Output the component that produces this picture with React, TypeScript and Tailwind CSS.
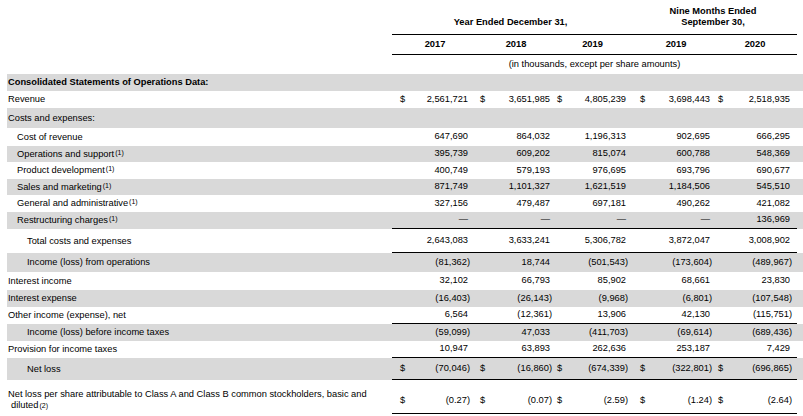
import type { ReactNode } from "react";

// column groups: 2017, 2018, 2019 | 2019, 2020 (9 months)
const GROUPS = [
  "w-[78px] pl-[8px] pr-[0px]",
  "w-[82px] pl-[10px] pr-[0px]",
  "w-[77px] pl-[5px] pr-[1px]",
  "w-[83px] pl-[11px] pr-[0px]",
  "w-[85px] pl-[6px] pr-[5px]",
];

const Sup = ({ n, flat }: { n: number; flat?: boolean }) => (
  <span className={`ml-[1px] text-[7px] leading-none ${flat ? "align-baseline" : "align-[2px]"}`}>({n})</span>
);

type RowProps = {
  label: ReactNode;
  indent?: 0 | 1 | 2;
  values?: string[];
  dollar?: boolean;
  gray?: boolean;
  h: string;
  line?: boolean;
  bold?: boolean;
  bottom?: boolean;
};

const Row = ({ label, indent = 0, values, dollar, gray, h, line, bold, bottom }: RowProps) => (
  <div className={`flex ${h} ${gray ? "bg-[#d9d9d9]" : ""}`}>
    <div
      className={`w-[385px] flex ${bottom ? "items-end pb-[3px]" : "items-center"} ${
        indent === 0 ? "pl-[1px]" : indent === 1 ? "pl-[10px]" : "pl-[20px]"
      } ${bold ? "font-bold" : ""}`}
    >
      <div className="leading-[11px]">{label}</div>
    </div>
    <div className={`flex h-full ${line ? "border-b border-black" : ""}`}>
      {GROUPS.map((g, i) => {
        const v = values ? values[i] : "";
        const neg = v.startsWith("(");
        return (
          <div key={i} className={`${g} flex justify-between ${bottom ? "items-end pb-[5px]" : "items-center"}`}>
            <span>{dollar ? "$" : ""}</span>
            <span className={neg ? "" : "pr-[2px]"}>{v}</span>
          </div>
        );
      })}
    </div>
  </div>
);

export default function App() {
  return (
    <div className="w-[803px] h-[416px] bg-white text-black pl-[7px] text-[9.3px] font-['Liberation_Sans',Arial,sans-serif] overflow-hidden">
      {/* header rows */}
      <div className="flex h-[35px]">
        <div className="w-[385px]" />
        <div className="flex h-full border-b border-black font-bold leading-[10.5px]">
          <div className="w-[237px] flex items-end justify-center pb-[7px]">Year Ended December 31,</div>
          <div className="w-[168px] flex items-end justify-center text-center pb-[7px]">
            Nine Months Ended
            <br />
            September 30,
          </div>
        </div>
      </div>
      <div className="flex h-[20px]">
        <div className="w-[385px]" />
        <div className="flex h-full border-b border-black font-bold">
          {["2017", "2018", "2019", "2019", "2020"].map((y, i) => (
            <div key={i} className={`${GROUPS[i]} flex items-center justify-center`}>
              {y}
            </div>
          ))}
        </div>
      </div>
      <div className="flex h-[19px]">
        <div className="w-[385px]" />
        <div className="w-[405px] flex items-center justify-center">(in thousands, except per share amounts)</div>
      </div>

      <Row label="Consolidated Statements of Operations Data:" bold gray h="h-[17px]" />
      <Row label="Revenue" dollar values={["2,561,721", "3,651,985", "4,805,239", "3,698,443", "2,518,935"]} h="h-[17px]" />
      <Row label="Costs and expenses:" gray h="h-[20px]" />
      <Row label="Cost of revenue" indent={1} values={["647,690", "864,032", "1,196,313", "902,695", "666,295"]} h="h-[18px]" />
      <Row label={<>Operations and support<Sup n={1} /></>} indent={1} gray values={["395,739", "609,202", "815,074", "600,788", "548,369"]} h="h-[16px]" />
      <Row label={<>Product development<Sup n={1} /></>} indent={1} values={["400,749", "579,193", "976,695", "693,796", "690,677"]} h="h-[17px]" />
      <Row label={<>Sales and marketing<Sup n={1} /></>} indent={1} gray values={["871,749", "1,101,327", "1,621,519", "1,184,506", "545,510"]} h="h-[16px]" />
      <Row label={<>General and administrative<Sup n={1} /></>} indent={1} values={["327,156", "479,487", "697,181", "490,262", "421,082"]} h="h-[17px]" />
      <Row label={<>Restructuring charges<Sup n={1} /></>} indent={1} gray line values={["—", "—", "—", "—", "136,969"]} h="h-[17px]" />
      <Row label="Total costs and expenses" indent={2} line values={["2,643,083", "3,633,241", "5,306,782", "3,872,047", "3,008,902"]} h="h-[24px]" />
      <Row label="Income (loss) from operations" indent={2} gray values={["(81,362)", "18,744", "(501,543)", "(173,604)", "(489,967)"]} h="h-[19px]" />
      <Row label="Interest income" values={["32,102", "66,793", "85,902", "68,661", "23,830"]} h="h-[18px]" />
      <Row label="Interest expense" gray values={["(16,403)", "(26,143)", "(9,968)", "(6,801)", "(107,548)"]} h="h-[17px]" />
      <Row label="Other income (expense), net" line values={["6,564", "(12,361)", "13,906", "42,130", "(115,751)"]} h="h-[17px]" />
      <Row label="Income (loss) before income taxes" indent={2} gray values={["(59,099)", "47,033", "(411,703)", "(69,614)", "(689,436)"]} h="h-[17px]" />
      <Row label="Provision for income taxes" line values={["10,947", "63,893", "262,636", "253,187", "7,429"]} h="h-[17px]" />
      <Row label="Net loss" indent={2} gray line dollar values={["(70,046)", "(16,860)", "(674,339)", "(322,801)", "(696,865)"]} h="h-[22px]" />
      <Row
        label={
          <div className="pl-[3px] [text-indent:-3px]">
            Net loss per share attributable to Class A and Class B common stockholders, basic and diluted<Sup n={2} flat />
          </div>
        }
        line
        bottom
        dollar
        values={["(0.27)", "(0.07)", "(2.59)", "(1.24)", "(2.64)"]}
        h="h-[34px]"
      />
    </div>
  );
}
